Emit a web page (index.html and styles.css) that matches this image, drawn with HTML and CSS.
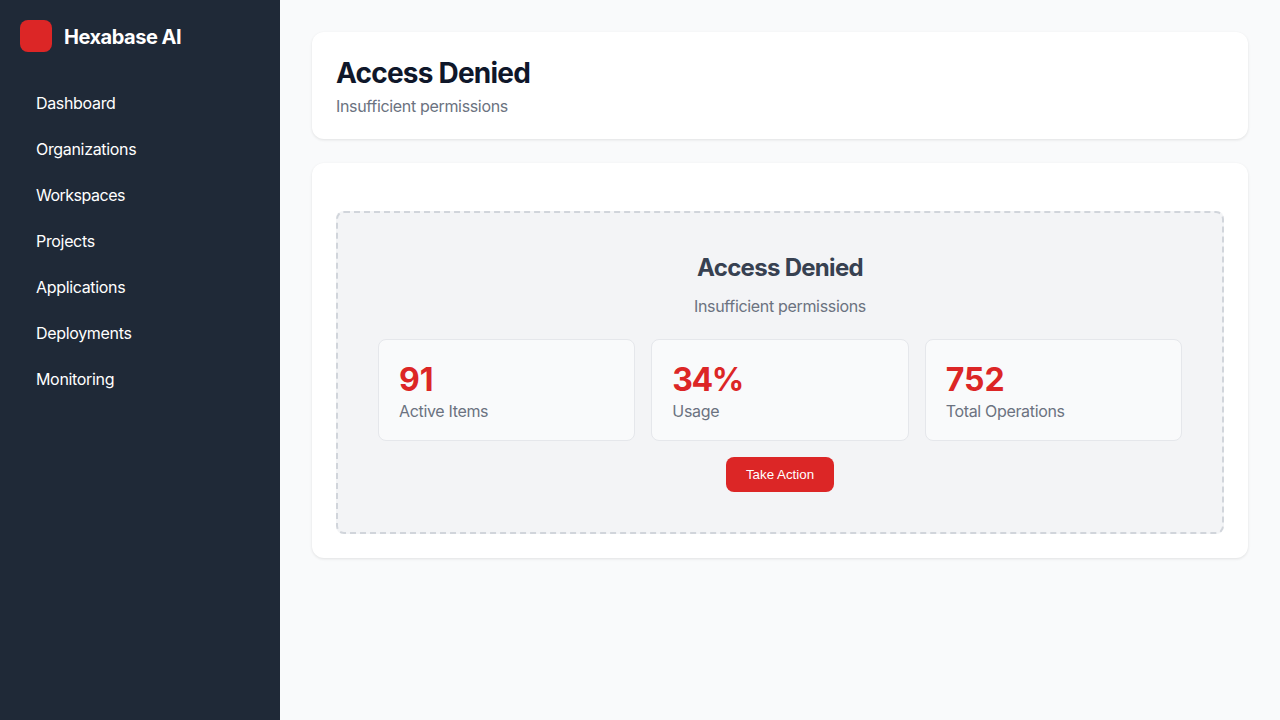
FILE: index.html
```html
<!DOCTYPE html>
<html lang="en">
<head>
<meta charset="utf-8">
<title>Hexabase AI</title>
<link rel="stylesheet" href="styles.css">
</head>
<body>
<div class="app">
  <aside class="sidebar">
    <div class="brand"><div class="logo"></div><div class="brand-name">Hexabase AI</div></div>
    <nav class="nav">
      <a class="nav-item">Dashboard</a>
      <a class="nav-item">Organizations</a>
      <a class="nav-item tight">Workspaces</a>
      <a class="nav-item">Projects</a>
      <a class="nav-item">Applications</a>
      <a class="nav-item">Deployments</a>
      <a class="nav-item">Monitoring</a>
    </nav>
  </aside>
  <main class="main">
    <header class="card header">
      <h1 class="title">Access Denied</h1>
      <p class="subtitle">Insufficient permissions</p>
    </header>
    <section class="card content">
      <div class="placeholder">
        <h2 class="heading">Access Denied</h2>
        <p class="message">Insufficient permissions</p>
        <div class="stats">
          <div class="stat"><div class="value">91</div><div class="label">Active Items</div></div>
          <div class="stat"><div class="value percent">34%</div><div class="label">Usage</div></div>
          <div class="stat"><div class="value">752</div><div class="label">Total Operations</div></div>
        </div>
        <button class="button">Take Action</button>
      </div>
    </section>
  </main>
</div>
</body>
</html>
```
FILE: styles.css
```css
* { box-sizing: border-box; margin: 0; padding: 0; }
body { font-family: Inter, sans-serif; font-size: 16px; letter-spacing: -0.33px; background: #f9fafb; color: #111827; }
.app { display: flex; height: 100vh; }
.sidebar { width: 280px; flex: none; background: #1f2937; color: #fff; padding: 20px; }
.brand { display: flex; align-items: center; gap: 12px; height: 32px; margin-bottom: 28px; }
.logo { width: 32px; height: 32px; border-radius: 8px; background: #dc2626; }
.brand-name { font-size: 20px; line-height: 32px; padding-top: 2px; font-weight: 700; letter-spacing: -0.48px; }
.nav { display: flex; flex-direction: column; gap: 4px; }
.nav-item { display: block; height: 42px; padding: 0 16px; line-height: 46px; }
.tight { letter-spacing: -0.5px; }
.main { flex: 1; padding: 32px; display: flex; flex-direction: column; gap: 24px; }
.card { background: #fff; border-radius: 12px; padding: 24px; box-shadow: 0 1px 3px rgba(0,0,0,.1); }
.header { height: 107px; }
.title { font-size: 28px; line-height: 34px; font-weight: 700; letter-spacing: -0.77px; color: #0f172a; }
.subtitle { color: #6b7280; line-height: 19px; margin-top: 7px; }
.content { height: 395px; }
.placeholder { margin-top: 24px; height: 323px; padding: 40px; border: 2px dashed #d1d5db; border-radius: 8px; background: #f3f4f6; text-align: center; }
.heading { font-size: 24px; line-height: 29px; font-weight: 700; letter-spacing: -0.7px; color: #374151; }
.message { color: #6b7280; line-height: 19px; margin-top: 15px; }
.stats { display: grid; grid-template-columns: repeat(3, 1fr); gap: 16px; margin-top: 23px; text-align: left; }
.stat { height: 102px; padding: 20px; border: 1px solid #e5e7eb; border-radius: 8px; background: #f9fafb; }
.value { font-size: 32px; line-height: 39px; font-weight: 700; letter-spacing: 0; color: #dc2626; }
.percent { letter-spacing: -1.4px; }
.label { color: #6b7280; line-height: 19px; margin-top: 3px; }
.button { display: inline-block; margin-top: 16px; height: 35px; padding: 0 20px; border: 0; border-radius: 8px; background: #dc2626; color: #fff; font: 13.333px "Liberation Sans", Arial, sans-serif; letter-spacing: 0; }
```
